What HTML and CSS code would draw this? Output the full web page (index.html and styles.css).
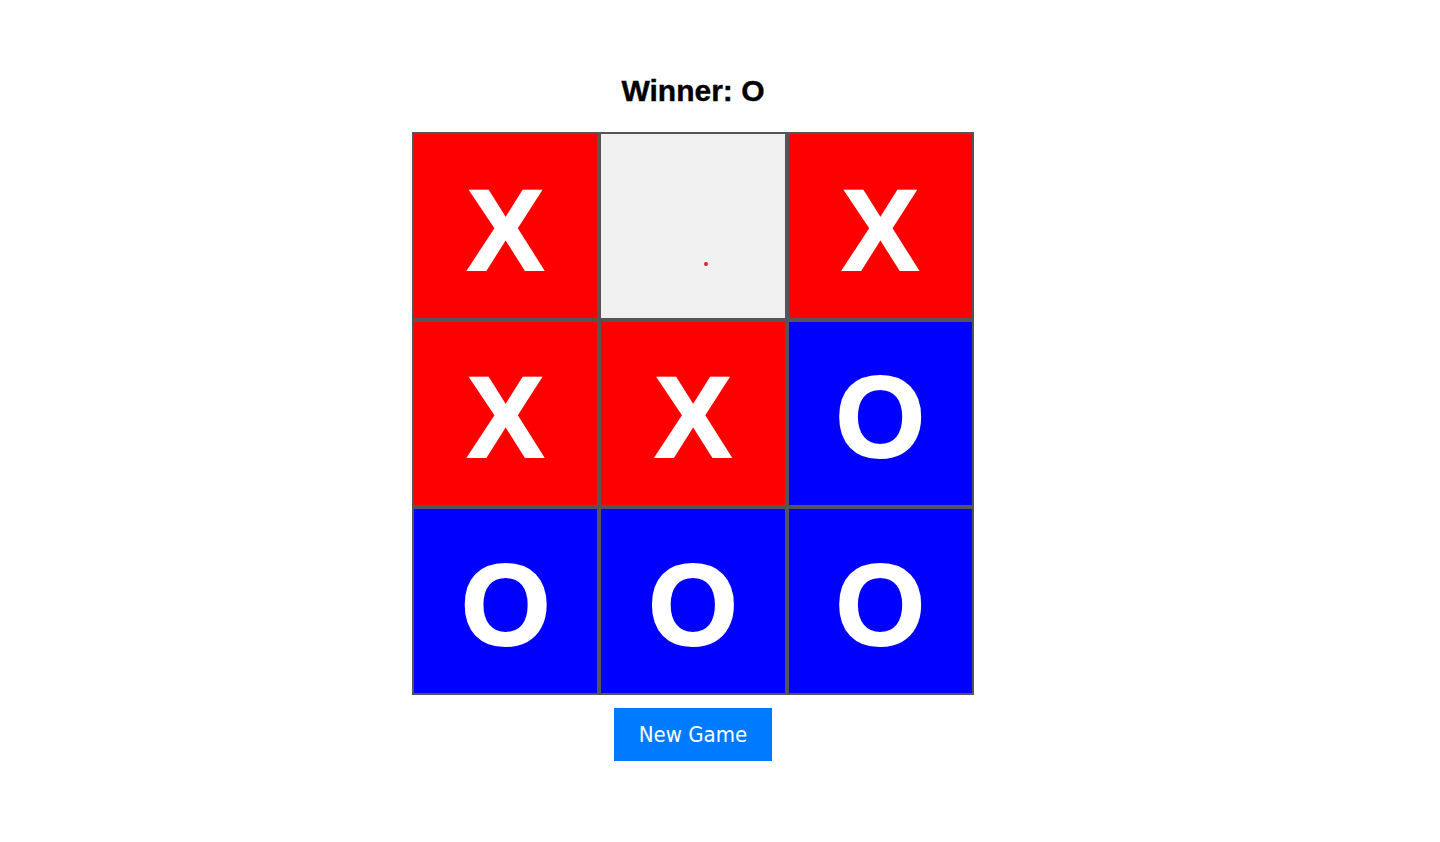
FILE: index.html
```html
<!DOCTYPE html>
<html lang="en">
<head>
<meta charset="utf-8">
<title>Tic Tac Toe</title>
<link rel="stylesheet" href="styles.css">
</head>
<body>
<div class="app">
  <h1 class="status">Winner: O</h1>
  <div class="board">
    <div class="cell x">X</div>
    <div class="cell empty"><span class="dot"></span></div>
    <div class="cell x">X</div>
    <div class="cell x">X</div>
    <div class="cell x">X</div>
    <div class="cell o">O</div>
    <div class="cell o">O</div>
    <div class="cell o">O</div>
    <div class="cell o">O</div>
  </div>
  <button class="new-game">New Game</button>
</div>
</body>
</html>
```
FILE: styles.css
```css
html, body {
  margin: 0;
  padding: 0;
  background: #ffffff;
}

.app {
  width: 1386px;
  display: flex;
  flex-direction: column;
  align-items: center;
  padding-top: 73px;
}

.status {
  margin: 0 0 24px 0;
  font-family: "Liberation Sans", Arial, sans-serif;
  font-weight: bold;
  font-size: 30px;
  line-height: 35px;
  color: #000;
  -webkit-text-stroke: 0.4px #000;
}

.board {
  width: 562px;
  height: 563px;
  display: grid;
  grid-template-columns: repeat(3, 1fr);
  grid-template-rows: repeat(3, 1fr);
}

.cell {
  box-sizing: border-box;
  border: 2px solid #555555;
  display: flex;
  align-items: center;
  justify-content: center;
  padding-top: 9px;
  font-family: "Liberation Sans", Arial, sans-serif;
  font-weight: bold;
  font-size: 115px;
  line-height: 1;
  color: #ffffff;
  -webkit-text-stroke: 2px #ffffff;
  position: relative;
}

.cell.x { background: #ff0000; }
.cell.o { background: #0000ff; }
.cell.empty { background: #f0f0f0; }

.dot {
  position: absolute;
  left: 103px;
  top: 128px;
  width: 4px;
  height: 4px;
  border-radius: 50%;
  background: #e02020;
}

.new-game {
  margin-top: 13px;
  border: none;
  background: #007bff;
  color: #ffffff;
  font-family: "DejaVu Sans Condensed", "DejaVu Sans", Verdana, sans-serif;
  font-size: 22px;
  line-height: 23px;
  padding: 15px 25px;
  cursor: pointer;
}
```
